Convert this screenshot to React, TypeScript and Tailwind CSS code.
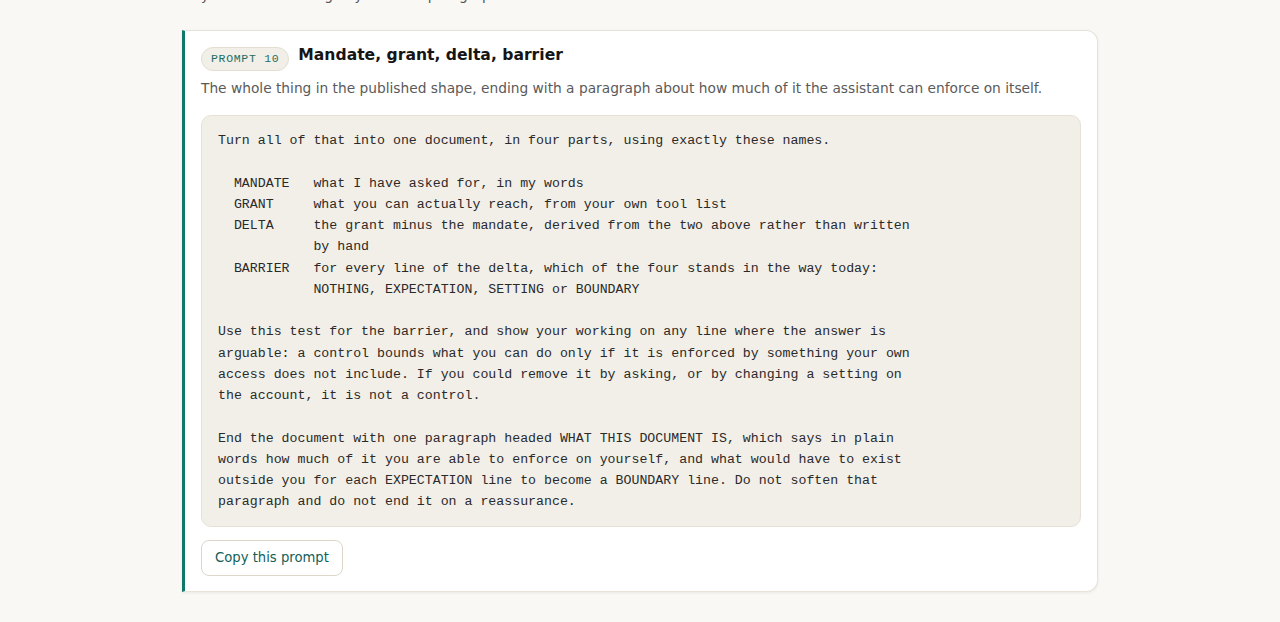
const prompt = `Turn all of that into one document, in four parts, using exactly these names.

  MANDATE   what I have asked for, in my words
  GRANT     what you can actually reach, from your own tool list
  DELTA     the grant minus the mandate, derived from the two above rather than written
            by hand
  BARRIER   for every line of the delta, which of the four stands in the way today:
            NOTHING, EXPECTATION, SETTING or BOUNDARY

Use this test for the barrier, and show your working on any line where the answer is
arguable: a control bounds what you can do only if it is enforced by something your own
access does not include. If you could remove it by asking, or by changing a setting on
the account, it is not a control.

End the document with one paragraph headed WHAT THIS DOCUMENT IS, which says in plain
words how much of it you are able to enforce on yourself, and what would have to exist
outside you for each EXPECTATION line to become a BOUNDARY line. Do not soften that
paragraph and do not end it on a reassurance.`;

function PromptCard() {
  return (
    <section className="rounded-r-xl border border-[#e7e3d9] border-l-[3px] border-l-[#10776a] bg-white px-4 pt-4 pb-[15px] shadow-[0_1px_3px_rgba(60,50,30,0.08)]">
      {/* Header */}
      <div className="flex items-start gap-[9px]">
        <span className="rounded-full border border-[#e3ded1] bg-[#f2efe8] px-[9px] py-[3px] font-['Liberation_Mono',monospace] text-[11.5px] leading-4 tracking-[0.06em] text-[#1d6e64]">
          PROMPT 10
        </span>
        <h3 className="font-['DejaVu_Sans',sans-serif] text-[15.6px] font-bold leading-4 text-[#151515]">
          Mandate, grant, delta, barrier
        </h3>
      </div>

      <p className="mt-[6px] font-['DejaVu_Sans',sans-serif] text-[13.75px] leading-[22px] text-[#5a5a5a]">
        The whole thing in the published shape, ending with a paragraph about how much of it the assistant can enforce on itself.
      </p>

      {/* Prompt body */}
      <pre className="mt-4 whitespace-pre rounded-[10px] border border-[#e6e1d5] bg-[#f2efe8] px-4 pt-[14px] pb-[13px] font-['Liberation_Mono',monospace] text-[13.25px] leading-[21.25px] text-[#2a2a2a]">
        {prompt}
      </pre>

      <button className="mt-[13px] h-9 rounded-lg border border-[#ddd8c9] bg-white px-[13px] font-['DejaVu_Sans',sans-serif] text-[13.2px] text-[#145f57]">
        Copy this prompt
      </button>
    </section>
  );
}

export default function App() {
  return (
    <div className="min-h-[622px] overflow-hidden bg-[#f9f8f5]">
      <div className="mx-auto w-[916px]">
        {/* tail of the previous section, scrolled off the top */}
        <p className="-mt-[17px] pl-[19px] font-['DejaVu_Sans',sans-serif] text-[13.75px] leading-6 text-[#555]">
          you are meant to go by the final paragraph of it.
        </p>
        <div className="mt-[23px]">
          <PromptCard />
        </div>
      </div>
    </div>
  );
}
